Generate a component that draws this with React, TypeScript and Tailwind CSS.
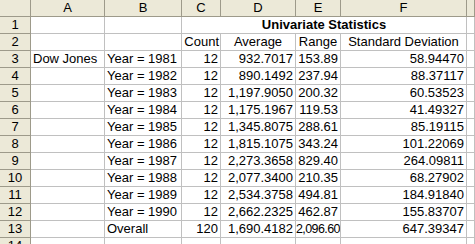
import React from 'react';

const rows: [string, string, string, string, string, string][] = [
  ['Dow Jones', 'Year = 1981', '12', '932.7017', '153.89', '58.94470'],
  ['', 'Year = 1982', '12', '890.1492', '237.94', '88.37117'],
  ['', 'Year = 1983', '12', '1,197.9050', '200.32', '60.53523'],
  ['', 'Year = 1984', '12', '1,175.1967', '119.53', '41.49327'],
  ['', 'Year = 1985', '12', '1,345.8075', '288.61', '85.19115'],
  ['', 'Year = 1986', '12', '1,815.1075', '343.24', '101.22069'],
  ['', 'Year = 1987', '12', '2,273.3658', '829.40', '264.09811'],
  ['', 'Year = 1988', '12', '2,077.3400', '210.35', '68.27902'],
  ['', 'Year = 1989', '12', '2,534.3758', '494.81', '184.91840'],
  ['', 'Year = 1990', '12', '2,662.2325', '462.87', '155.83707'],
  ['', 'Overall', '120', '1,690.4182', '2,096.60', '647.39347'],
];

const hdr = 'h-[17px] bg-[#ece9d8] border-r border-b border-[#9d9a8a] text-center leading-[16px] text-black';
const cell = 'h-[17px] border-r border-b border-[#c0c0c0] leading-[16px] whitespace-nowrap overflow-hidden';

export default function App() {
  return (
    <div
      className="w-[475px] h-[244px] overflow-hidden bg-white text-[13px] text-black"
      style={{ fontFamily: '"Liberation Sans", Arial, sans-serif' }}
    >
      <div className="grid grid-cols-[31px_74px_77px_39px_75px_45px_126px_1fr]">
        {/* column letters */}
        <div className={hdr}></div>
        {['A', 'B', 'C', 'D', 'E', 'F', ''].map((c, i) => (
          <div key={i} className={hdr}>{c}</div>
        ))}

        {/* row 1: title */}
        <div className={hdr}>1</div>
        <div className={cell}></div>
        <div className={cell}></div>
        <div className={`${cell} col-span-4 text-center font-bold`}>Univariate Statistics</div>
        <div className={cell}></div>

        {/* row 2: headings */}
        <div className={hdr}>2</div>
        <div className={cell}></div>
        <div className={cell}></div>
        <div className={`${cell} text-right pr-px`}>Count</div>
        <div className={`${cell} text-center`}>Average</div>
        <div className={`${cell} text-center`}>Range</div>
        <div className={`${cell} text-center`}>Standard Deviation</div>
        <div className={cell}></div>

        {rows.map((r, i) => (
          <React.Fragment key={i}>
            <div className={hdr}>{i + 3}</div>
            <div className={`${cell} pl-[2px]`}>{r[0]}</div>
            <div className={`${cell} pl-[2px]`}>{r[1]}</div>
            <div className={`${cell} text-right pr-[2px]`}>{r[2]}</div>
            <div className={`${cell} text-right pr-[2px]`}>{r[3]}</div>
            {/* long value squeezed a bit so it fits the narrow column */}
            <div
              className={
                r[4].length > 6
                  ? `${cell} text-right pr-px text-[12.5px] tracking-[-0.6px]`
                  : `${cell} text-right pr-[2px]`
              }
            >
              {r[4]}
            </div>
            <div className={`${cell} text-right pr-[2px]`}>{r[5]}</div>
            <div className={cell}></div>
          </React.Fragment>
        ))}

        {/* row 14, cut off */}
        <div className={hdr}>14</div>
        {[0, 1, 2, 3, 4, 5, 6].map((k) => (
          <div key={k} className={cell}></div>
        ))}
      </div>
    </div>
  );
}
